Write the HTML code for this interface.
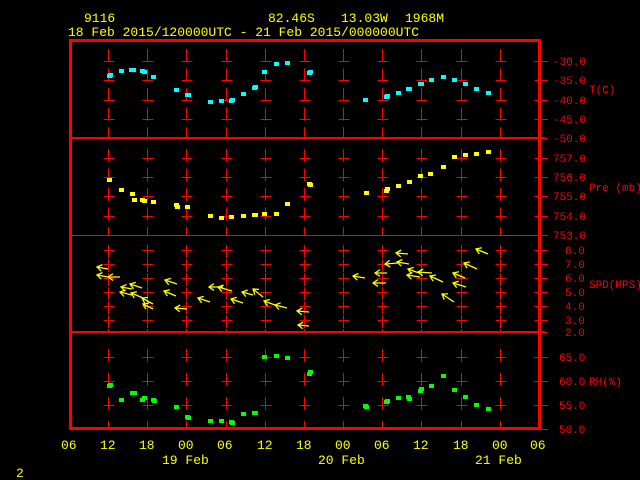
<!DOCTYPE html>
<html><head><meta charset="utf-8"><style>
html,body{margin:0;padding:0;background:#000;width:640px;height:480px;overflow:hidden}
svg text{font-family:"Liberation Mono",monospace;font-size:13px}
svg .r text{font-size:11px}
</style></head><body>
<svg id="s" width="640" height="480" xmlns="http://www.w3.org/2000/svg" shape-rendering="crispEdges">
<rect width="640" height="480" fill="#000"/>
<g fill="#ffff00">
<text x="84" y="22">9116</text>
<text x="268" y="22">82.46S</text>
<text x="341" y="22">13.03W</text>
<text x="405" y="22">1968M</text>
<text x="68" y="36">18 Feb 2015/120000UTC - 21 Feb 2015/000000UTC</text>
<text x="61" y="449">06</text><text x="100" y="449">12</text><text x="139" y="449">18</text><text x="178" y="449">00</text><text x="217" y="449">06</text><text x="257" y="449">12</text><text x="296" y="449">18</text><text x="335" y="449">00</text><text x="374" y="449">06</text><text x="413" y="449">12</text><text x="453" y="449">18</text><text x="492" y="449">00</text><text x="530" y="449">06</text>
<text x="162" y="464">19 Feb</text><text x="318" y="464">20 Feb</text><text x="475" y="464">21 Feb</text>
<text x="16" y="477">2</text>
</g>
<g class="r" fill="#ff0000">
<text x="553" y="65">-30.0</text><text x="553" y="84">-35.0</text><text x="553" y="104">-40.0</text><text x="553" y="123">-45.0</text><text x="553" y="142">-50.0</text>
<text x="589" y="93">T(C)</text>
<text x="553" y="162">757.0</text><text x="553" y="181">756.0</text><text x="553" y="200">755.0</text><text x="553" y="220">754.0</text><text x="553" y="239">753.0</text>
<text x="589" y="191">Pre (mb)</text>
<text x="565" y="254">8.0</text><text x="565" y="268">7.0</text><text x="565" y="282">6.0</text><text x="565" y="296">5.0</text><text x="565" y="310">4.0</text><text x="565" y="324">3.0</text><text x="565" y="336">2.0</text>
<text x="589" y="288">SPD(MPS)</text>
<text x="559" y="361">65.0</text><text x="559" y="385">60.0</text><text x="559" y="409">55.0</text><text x="559" y="433">50.0</text>
<text x="589" y="385">RH(%)</text>
</g>
<g id="g"></g>
<g fill="none" stroke="#ff0000">
<line x1="70" y1="138" x2="545" y2="138" stroke-width="2"/>
<line x1="70" y1="235.5" x2="545" y2="235.5" stroke-width="1"/>
<line x1="70" y1="332" x2="545" y2="332" stroke-width="2"/>
<rect x="70.5" y="40.5" width="469" height="388" stroke-width="3"/>
</g>
</svg>
<script>
var s=document.getElementById('g'),h='';
var xs=[];for(var i=1;i<=12;i++)xs.push(69+i*39.15);
var panels=[[49,138,[61,80,100,119,138],19.5],[149,235,[158,177,196,216,235],19.5],[245,332,[250,264,278,292,306,320,332],14],[349,427,[357,381,405,429],24]];
panels.forEach(function(p){
 xs.forEach(function(x,k){
  x=Math.round(x)+0.5;
  if(k<11){for(var y=p[0];y<p[1];y+=p[3]){var e=Math.min(y+13,p[1]);h+='<line x1="'+x+'" y1="'+y+'" x2="'+x+'" y2="'+e+'" stroke="#f00"/>';}}
  p[2].forEach(function(t){if(t<427)h+='<line x1="'+(x-5)+'" y1="'+(t+.5)+'" x2="'+(x+6)+'" y2="'+(t+.5)+'" stroke="#f00"/>';});
 });
 p[2].forEach(function(t){h+='<line x1="535" y1="'+(t+.5)+'" x2="548" y2="'+(t+.5)+'" stroke="#f00"/>';});
});
function pts(a,c){a.forEach(function(q){h+='<rect x="'+(q[0]-2)+'" y="'+(q[1]-2)+'" width="5" height="4" fill="'+c+'"/>';});}
pts([[109,76],[110,75],[121,71],[131,70],[133,70],[142,71],[144,72],[153,77],[176,90],[187,95],[188,95],[210,102],[221,101],[231,101],[232,100],[243,94],[254,88],[255,87],[264,72],[276,64],[287,63],[309,73],[310,72],[365,100],[386,97],[387,96],[398,93],[408,89],[409,89],[420,84],[421,84],[431,80],[443,77],[454,80],[465,84],[476,89],[488,93]],'#00ffff');
pts([[109,180],[121,190],[132,194],[134,200],[142,200],[144,201],[153,202],[176,205],[177,207],[187,207],[210,216],[221,218],[231,217],[243,216],[254,215],[255,215],[264,214],[276,214],[287,204],[309,184],[310,185],[366,193],[386,191],[387,189],[398,186],[409,182],[420,176],[430,174],[443,167],[454,157],[465,155],[476,154],[488,152]],'#ffff00');
pts([[109,386],[110,385],[121,400],[132,393],[134,393],[142,400],[144,398],[153,400],[154,401],[176,407],[187,417],[188,418],[210,421],[221,421],[231,422],[232,423],[243,414],[254,413],[255,413],[264,357],[276,356],[287,358],[309,374],[310,372],[365,406],[366,407],[386,402],[387,401],[398,398],[408,397],[409,399],[420,391],[421,389],[431,386],[443,376],[454,390],[465,397],[476,405],[488,409]],'#00ff00');
var ar=[[97,267,108,269],[97,275,108,277],[108,277,120,277],[121,287,132,289],[120,292,132,295],[130,284,142,288],[131,293,143,298],[142,298,153,304],[143,304,153,309],[165,280,177,284],[164,291,176,296],[175,308,187,309],[198,298,210,302],[209,287,223,287],[218,287,232,291],[231,299,243,303],[242,292,253,295],[253,289,263,297],[264,301,275,305],[275,305,287,308],[297,311,309,312],[298,325,309,326],[353,276,365,278],[375,273,387,273],[373,283,386,283],[385,264,398,263],[396,253,408,254],[397,262,409,264],[408,269,419,273],[407,275,420,277],[418,272,432,273],[430,276,443,282],[442,294,454,302],[453,273,465,278],[453,283,466,287],[464,263,477,269],[476,249,488,254]];
ar.forEach(function(a){
 var dx=a[2]-a[0],dy=a[3]-a[1],L=Math.sqrt(dx*dx+dy*dy),ux=dx/L,uy=dy/L;
 function r(t){var c=Math.cos(t),sn=Math.sin(t);return [a[0]+6*(ux*c-uy*sn),a[1]+6*(ux*sn+uy*c)];}
 var p1=r(0.6),p2=r(-0.6);
 h+='<path d="M'+a[2]+' '+a[3]+'L'+a[0]+' '+a[1]+'M'+p1[0].toFixed(1)+' '+p1[1].toFixed(1)+'L'+a[0]+' '+a[1]+'L'+p2[0].toFixed(1)+' '+p2[1].toFixed(1)+'" stroke="#ffff00" stroke-width="1.3" fill="none" shape-rendering="auto"/>';
});
s.innerHTML=h;
</script>
</body></html>
